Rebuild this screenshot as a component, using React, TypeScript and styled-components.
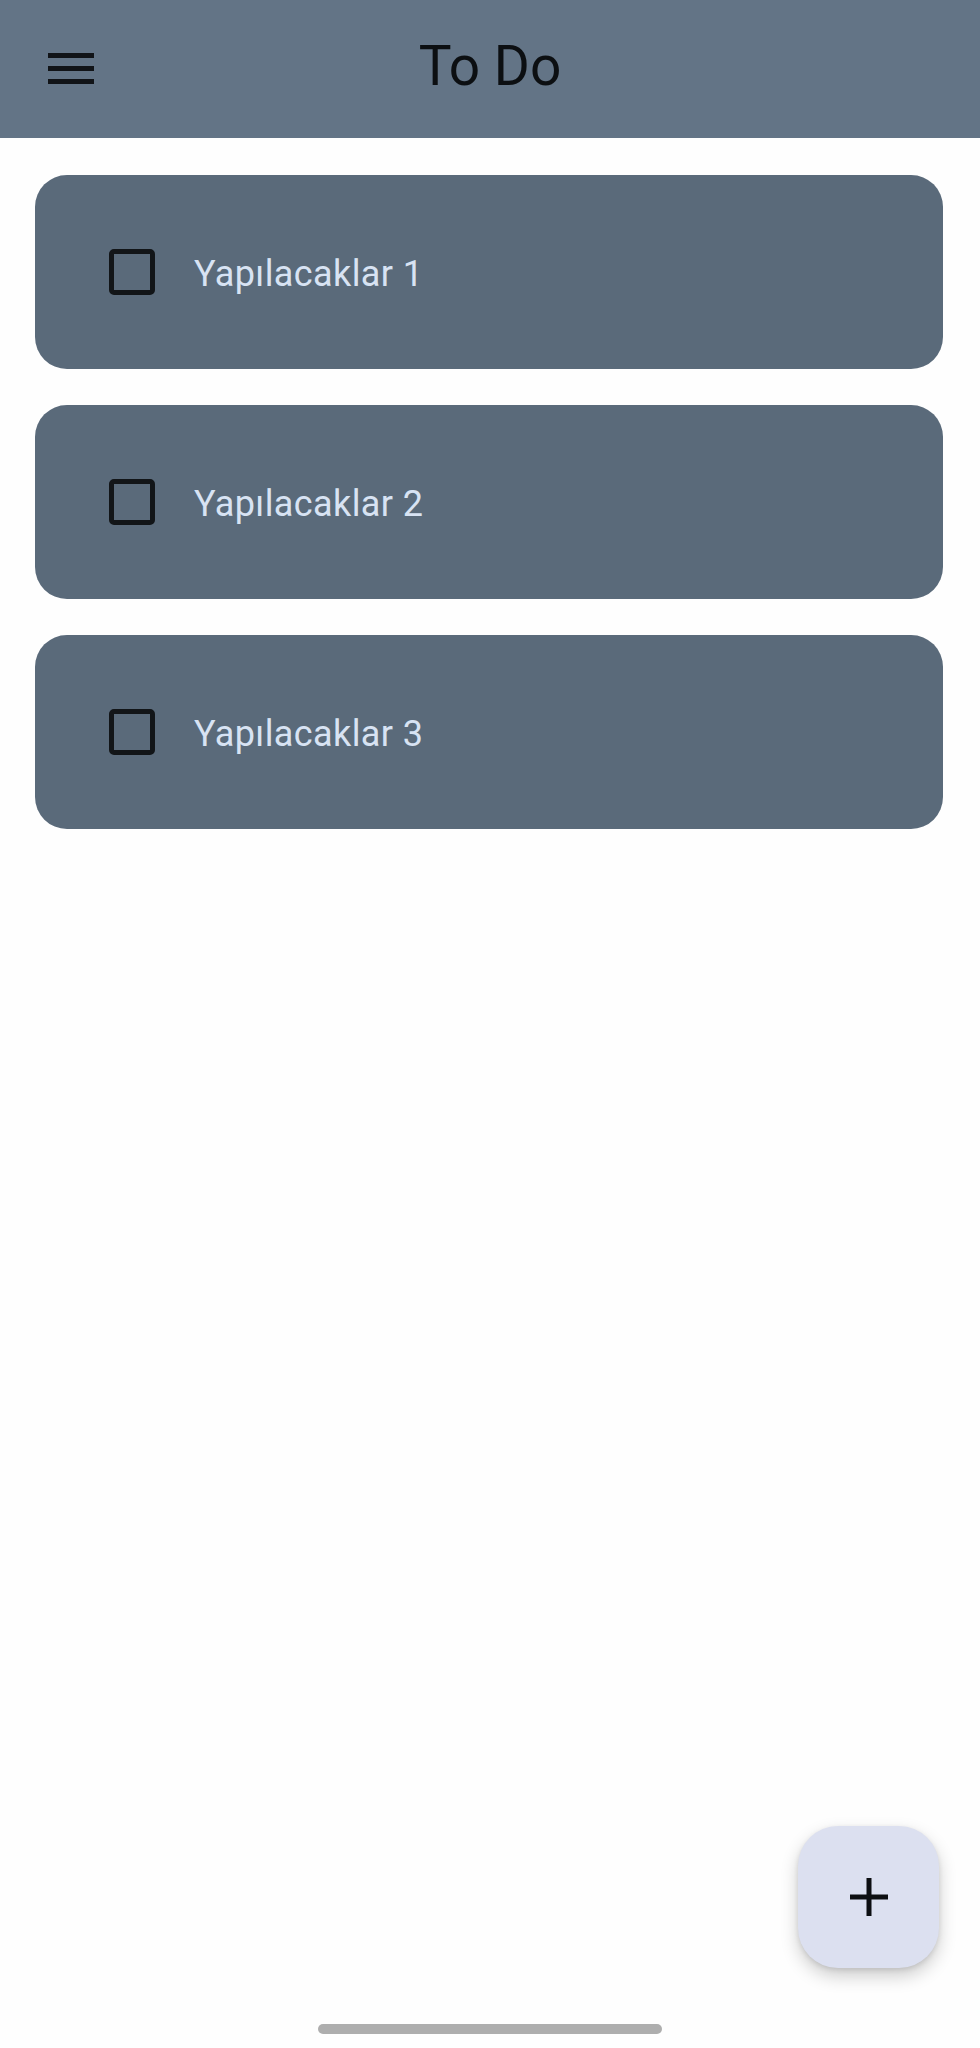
import React from "react";
import styled, { createGlobalStyle } from "styled-components";

const Global = createGlobalStyle`
  html, body { margin: 0; padding: 0; background: #fefefe; }
  body { font-family: Roboto, "Noto Sans", "Liberation Sans", sans-serif; }
  * { box-sizing: border-box; }
`;

const Page = styled.div`
  position: relative;
  width: 980px;
  height: 2048px;
  background: #fefefe;
  overflow: hidden;
`;

const AppBar = styled.header`
  position: relative;
  height: 138px;
  background: #637486;
  display: flex;
  align-items: center;
  justify-content: center;
`;

const MenuButton = styled.button`
  position: absolute;
  left: 48px;
  top: 53px;
  width: 46px;
  height: 31px;
  padding: 0;
  border: none;
  background: transparent;
  display: flex;
  flex-direction: column;
  justify-content: space-between;
`;

const MenuBar = styled.span`
  display: block;
  width: 46px;
  height: 5px;
  background: #111418;
`;

const Title = styled.h1`
  margin: 0;
  margin-top: -6px;
  font-family: Roboto, sans-serif;
  font-weight: 400;
  font-size: 55px;
  color: #0c0f12;
  letter-spacing: 0;
`;

const List = styled.main`
  display: flex;
  flex-direction: column;
  gap: 36px;
  padding: 37px 37px 0 35px;
`;

const Card = styled.div`
  height: 194px;
  border-radius: 32px;
  background: #5a6a7a;
  display: flex;
  align-items: center;
  padding-left: 74px;
  gap: 39px;
`;

const Check = styled.span`
  width: 46px;
  height: 46px;
  border: 5px solid #121518;
  border-radius: 5px;
  flex-shrink: 0;
`;

const Label = styled.span`
  font-family: Roboto, sans-serif;
  font-size: 36px;
  font-weight: 400;
  color: #d8e3f3;
  letter-spacing: 0.4px;
  margin-top: 3px;
`;

const Fab = styled.button`
  position: absolute;
  left: 798px;
  top: 1826px;
  width: 141px;
  height: 142px;
  border: none;
  border-radius: 40px;
  background: #dce0f0;
  box-shadow: 0 8px 18px rgba(0, 0, 0, 0.2), 0 2px 5px rgba(0, 0, 0, 0.1);
  display: flex;
  align-items: center;
  justify-content: center;
  padding: 0;
`;

const HomeIndicator = styled.div`
  position: absolute;
  left: 318px;
  bottom: 14px;
  width: 344px;
  height: 10px;
  border-radius: 5px;
  background: #aeaeae;
`;

const items = ["Yapılacaklar 1", "Yapılacaklar 2", "Yapılacaklar 3"];

export default function App() {
  return (
    <>
      <Global />
      <Page>
        <AppBar>
          <MenuButton aria-label="menu">
            <MenuBar />
            <MenuBar />
            <MenuBar />
          </MenuButton>
          <Title>To Do</Title>
        </AppBar>
        <List>
          {items.map((t) => (
            <Card key={t}>
              <Check />
              <Label>{t}</Label>
            </Card>
          ))}
        </List>
        <Fab aria-label="add">
          <svg width="38" height="38" viewBox="0 0 38 38">
            <rect x="16.5" y="0" width="5" height="38" fill="#0d0f12" />
            <rect x="0" y="16.5" width="38" height="5" fill="#0d0f12" />
          </svg>
        </Fab>
        <HomeIndicator />
      </Page>
    </>
  );
}
